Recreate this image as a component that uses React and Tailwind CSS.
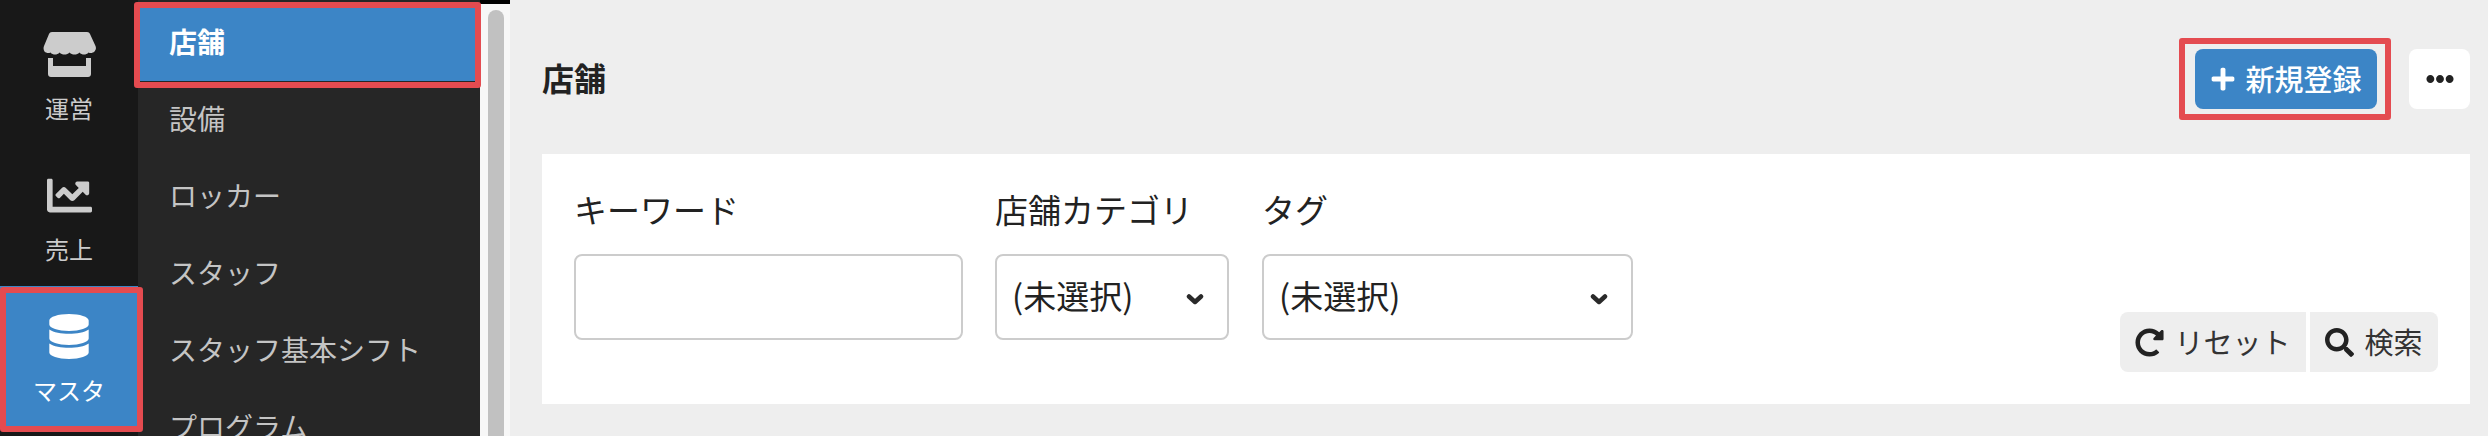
import { FaChartLine, FaDatabase, FaEllipsisH, FaPlus, FaRedoAlt, FaSearch } from 'react-icons/fa'

const FONT = "font-['Noto_Sans_CJK_JP','Noto_Sans',sans-serif]"

function StoreIcon() {
  return (
    <svg viewBox="0 0 53 45" className="w-[53px] h-[45px]" fill="#cccccc">
      <path d="M9 0h35c1.500 0 2.500.8 3 2l5.500 12c.8 2 .5 4-1 5.500-1.500 1.500-4 2-6 1-1 1.500-3 2-4.500 2s-3.500-.5-4.500-2c-1.500 1.500-3 2-5 2s-3.500-.5-5-2c-1.500 1.500-3 2-5 2s-3.500-.5-5-2c-1 1.500-3 2-4.500 2s-3.500-.5-4.500-2c-2 1-4.500.5-6-1C.500 18 .200 16 1 14L6 2c.5-1.200 1.500-2 3-2z" />
      <path d="M5 26h5v8h33v-8h5v16c0 1.700-1.300 3-3 3H8c-1.700 0-3-1.300-3-3z" />
    </svg>
  )
}

function RailItem({ icon, label, active }) {
  return (
    <div className={`relative h-[141px] flex flex-col items-center ${active ? 'bg-[#3c85c6] text-white border-t border-[#3c85c6] mt-[-1px] h-[142px]' : 'text-[#cccccc]'}`}>
      <div className="h-[88px] pt-[10px] flex items-center justify-center">{icon}</div>
      <span className="text-[24px] leading-[30px]">{label}</span>
      {active && <span className="absolute z-10 left-0 right-[-5px] top-0 bottom-[-4px] border-[6px] border-[#e44b50] rounded-[3px]" />}
    </div>
  )
}

function SubItem({ label, active }) {
  return (
    <div className={`relative shrink-0 pl-[31px] text-[28px] leading-[66px] ${active ? 'h-[73px] mb-[4px] bg-[#3c85c6] text-white font-bold' : 'h-[77px] text-[#c4c4c4]'}`}>
      {label}
      {active && <span className="absolute z-10 left-[-4px] right-[-6px] top-[-6px] bottom-[-7px] border-[6px] border-[#e44b50] rounded-[3px]" />}
    </div>
  )
}

function Field({ label, width, children }) {
  return (
    <div className={`flex flex-col ${width}`}>
      <label className="text-[33px] leading-[44px] text-[#222222] mb-[23px] whitespace-nowrap">{label}</label>
      {children}
    </div>
  )
}

function Select() {
  return (
    <div className="relative">
      <select className="w-full h-[86px] border-2 border-[#cccccc] rounded-[8px] bg-white pl-[15px] pb-[2px] text-[33px] text-[#222222] appearance-none outline-none">
        <option>(未選択)</option>
      </select>
      <svg viewBox="0 0 18 11" className="absolute top-[40px] right-[25px] w-[18px] h-[11px]" fill="none" stroke="#2a2a2a" strokeWidth="4.500" strokeLinecap="round" strokeLinejoin="round">
        <polyline points="3,2.500 9,8 15,2.500" />
      </svg>
    </div>
  )
}

export default function App() {
  return (
    <div className={`${FONT} w-[2488px] h-[436px] flex overflow-hidden bg-[#eeeeee]`}>
      <aside className="w-[138px] shrink-0 bg-[#181818] pt-[5px]">
        <RailItem icon={<StoreIcon />} label="運営" />
        <RailItem icon={<FaChartLine className="w-[45px] h-[45px]" />} label="売上" />
        <RailItem active icon={<FaDatabase className="w-[40px] h-[45px]" />} label="マスタ" />
      </aside>

      <nav className="w-[342px] shrink-0 bg-[#262626] flex flex-col pt-[8px]">
        <div className="mr-[5px]">
          <SubItem active label="店舗" />
        </div>
        <SubItem label="設備" />
        <SubItem label="ロッカー" />
        <SubItem label="スタッフ" />
        <SubItem label="スタッフ基本シフト" />
        <SubItem label="プログラム" />
      </nav>

      <div className="w-[30px] shrink-0 bg-[#f7f7f7] flex flex-col">
        <div className="h-[4px] bg-black" />
        <div className="mt-[6px] ml-[8px] w-[16px] flex-1 rounded-t-full bg-[#c1c1c1]" />
      </div>

      <main className="flex-1 pl-[32px] pr-[18px] pt-[49px]">
        <header className="h-[60px] flex items-center justify-between">
          <h1 className="text-[32px] font-bold text-[#222222] mt-[-5px]">店舗</h1>
          <div className="flex items-center gap-[32px]">
            <div className="relative">
              <button className="w-[182px] h-[60px] rounded-[8px] bg-[#3c85c6] text-white text-[29px] font-medium flex items-center justify-center gap-[9px]">
                <FaPlus className="w-[26px] h-[26px]" />
                新規登録
              </button>
              <span className="absolute z-10 left-[-16px] right-[-14px] top-[-11px] bottom-[-11px] border-[6px] border-[#e44b50] rounded-[3px]" />
            </div>
            <button className="w-[61px] h-[60px] rounded-[8px] bg-white flex items-center justify-center text-[#222222]">
              <FaEllipsisH className="w-[28px] h-[28px]" />
            </button>
          </div>
        </header>

        <section className="mt-[45px] h-[250px] bg-white pl-[32px] pr-[32px] pt-[33px] flex items-start gap-[32px] relative">
          <Field label="キーワード" width="w-[389px]">
            <input className="h-[86px] border-2 border-[#cccccc] rounded-[8px] outline-none" />
          </Field>
          <Field label="店舗カテゴリ" width="w-[234px] mr-[1px]">
            <Select />
          </Field>
          <Field label="タグ" width="w-[371px]">
            <Select />
          </Field>
          <div className="ml-auto self-end mb-[32px] flex gap-[4px] text-[29px] text-[#333333]">
            <button className="w-[186px] h-[60px] rounded-l-[8px] bg-[#eeeeee] flex items-center justify-center gap-[10px]">
              <FaRedoAlt className="w-[29px] h-[29px] text-[#222222]" />
              リセット
            </button>
            <button className="w-[128px] h-[60px] rounded-r-[8px] bg-[#eeeeee] flex items-center justify-center gap-[10px]">
              <FaSearch className="w-[29px] h-[29px] text-[#222222]" />
              検索
            </button>
          </div>
        </section>
      </main>
    </div>
  )
}
